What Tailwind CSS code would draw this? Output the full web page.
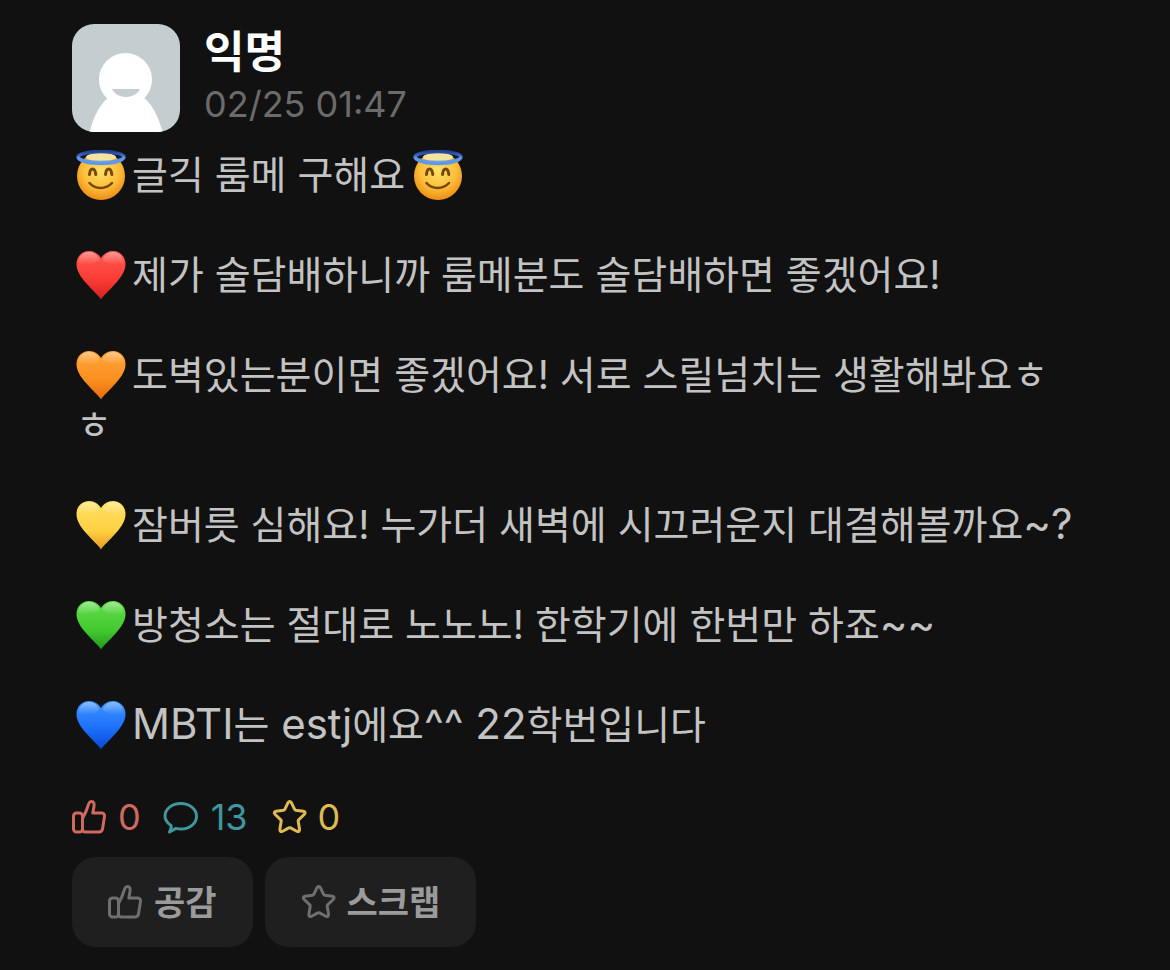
<!DOCTYPE html>
<html lang="ko">
<head>
  <meta charset="UTF-8">
  <meta name="viewport" content="width=device-width, initial-scale=1.0">
  <title>익명</title>
  <script src="https://cdn.jsdelivr.net/npm/@tailwindcss/browser@4"></script>
</head>
<body class="bg-[#111111] min-h-screen font-['Inter','Noto_Sans_CJK_KR',sans-serif]">

  <!-- shared shapes -->
  <svg class="absolute w-0 h-0" aria-hidden="true">
    <defs>
      <radialGradient id="face" cx="50%" cy="38%" r="62%">
        <stop offset="0" stop-color="#ffe06a"/>
        <stop offset="0.6" stop-color="#fdbf3b"/>
        <stop offset="1" stop-color="#ee8d17"/>
      </radialGradient>
      <linearGradient id="halo" x1="0" y1="0" x2="0" y2="1">
        <stop offset="0" stop-color="#1f4296"/>
        <stop offset="1" stop-color="#74aef5"/>
      </linearGradient>
      <linearGradient id="shine" x1="0" y1="0" x2="0" y2="1">
        <stop offset="0" stop-color="#fff" stop-opacity="0.4"/>
        <stop offset="1" stop-color="#fff" stop-opacity="0"/>
      </linearGradient>
      <linearGradient id="red" x1="0" y1="0" x2="0" y2="1">
        <stop offset="0" stop-color="#ff5a50"/><stop offset="0.6" stop-color="#fa3b35"/><stop offset="1" stop-color="#d3211f"/>
      </linearGradient>
      <linearGradient id="orange" x1="0" y1="0" x2="0" y2="1">
        <stop offset="0" stop-color="#ffa53c"/><stop offset="0.6" stop-color="#fb8f1e"/><stop offset="1" stop-color="#e8690f"/>
      </linearGradient>
      <linearGradient id="yellow" x1="0" y1="0" x2="0" y2="1">
        <stop offset="0" stop-color="#ffdf62"/><stop offset="0.6" stop-color="#ffd243"/><stop offset="1" stop-color="#e99a22"/>
      </linearGradient>
      <linearGradient id="green" x1="0" y1="0" x2="0" y2="1">
        <stop offset="0" stop-color="#62de4d"/><stop offset="0.6" stop-color="#43c930"/><stop offset="1" stop-color="#1f9a1c"/>
      </linearGradient>
      <linearGradient id="blue" x1="0" y1="0" x2="0" y2="1">
        <stop offset="0" stop-color="#3f93ff"/><stop offset="0.6" stop-color="#1a6dfb"/><stop offset="1" stop-color="#0b46d0"/>
      </linearGradient>
      <path id="heart-shape" d="M25 49.500C23 46 17 41 10 33C4 26 .5 20.500 .5 14C.5 6.500 6 1 13 1C18.500 1 22.500 4 25 8C27.500 4 31.500 1 37 1C44 1 49.500 6.500 49.500 14C49.500 20.500 46 26 40 33C33 41 27 46 25 49.500Z"/>
      <g id="heart-shine" fill="url(#shine)">
        <path d="M2.500 13C2.500 6 7.500 2 13 2C18 2 21.500 5 23.500 9.500C20 14 8 16 2.500 13Z"/>
        <path d="M47.500 13C47.500 6 42.500 2 37 2C32 2 28.500 5 26.500 9.500C30 14 42 16 47.500 13Z"/>
      </g>
      <symbol id="angel" viewBox="0 0 50 50">
        <ellipse cx="25" cy="6.500" rx="20" ry="5" fill="#10193a"/>
        <circle cx="25" cy="26" r="24" fill="url(#face)"/>
        <ellipse cx="25" cy="7" rx="15" ry="4" fill="#f3e3a0"/>
        <ellipse cx="25" cy="7" rx="23" ry="5.500" fill="none" stroke="url(#halo)" stroke-width="3.500"/>
        <path d="M2.500 8C7 15.500 43 15.500 47.500 8" fill="none" stroke="#5f98e8" stroke-width="3" stroke-linecap="round"/>
        <g fill="none" stroke="#76470a" stroke-linecap="round">
          <path d="M13.500 24.500C14 17 19 17 19.800 24.500M29.500 24.500C30.200 17 35.200 17 35.800 24.500" stroke-width="3"/>
          <path d="M13.500 33C19 39.500 30 39.500 36 33" stroke-width="2.500"/>
        </g>
      </symbol>
      <symbol id="thumb" viewBox="0 0 36 36">
        <rect x="1.500" y="14" width="9" height="19" rx="3"/>
        <path d="M10.500 19.500C13 15 14.500 12 15.800 7.500C16.700 4 17.500 2.500 19.300 2.500C21.800 2.500 22.500 4.500 22 7.500L20.800 14H29.800Q33 14.500 32.500 17.500L30.600 29.500Q30 33 27 33H13.500Q10.500 33 10.500 30Z"/>
      </symbol>
      <symbol id="star" viewBox="0 0 36 36">
        <path d="M15.900 3.900Q17.700 1 19.500 3.900L22.600 10.300Q23 11 23.800 11.200L31.300 12.300Q34.400 13 32.200 15.500L26.600 20.900Q26 21.500 26.200 22.300L27.500 30.100Q27.800 33.600 24.700 32.200L18.600 28.900Q17.700 28.400 16.800 28.900L10.700 32.200Q7.600 33.600 7.900 30.100L9.200 22.300Q9.400 21.500 8.800 20.900L3.200 15.500Q1 13 4.100 12.300L11.600 11.200Q12.400 11 12.800 10.300Z"/>
      </symbol>
    </defs>
  </svg>

  <article class="px-[72px] pt-6 pb-5">
    <header class="flex gap-6">
      <svg class="w-[108px] h-[108px] rounded-[22px] bg-[#c4cdd0] shrink-0" viewBox="0 0 108 108" role="img" aria-label="프로필">
        <path d="M17 110C21 93 28 80 37 73H71C80 80 87 93 91 110Z" fill="#fff"/>
        <circle cx="53.500" cy="55.500" r="26.500" fill="#fff"/>
        <path d="M40 65H68C63 75.500 45 75.500 40 65Z" fill="#c4cdd0"/>
      </svg>
      <div class="flex flex-col">
        <h1 class="text-white text-[44px] leading-[56px] font-bold">익명</h1>
        <time class="text-[#6b6b6b] text-4xl leading-[48px]">02/25 01:47</time>
      </div>
    </header>

    <div class="flex flex-col gap-[50px] mt-[18px] pl-1 pr-5 text-[#c3c3c3] text-[39px] leading-[50px] break-all">
      <p><svg class="inline-block align-top w-[50px] h-[50px] mr-[6px]"><use href="#angel"/></svg>글긱 룸메 구해요<svg class="inline-block align-top w-[50px] h-[50px] ml-2"><use href="#angel"/></svg></p>
      <p><svg class="inline-block align-top w-[50px] h-[50px] mr-[6px]"><use href="#heart-shape" fill="url(#red)"/><use href="#heart-shine"/></svg>제가 술담배하니까 룸메분도 술담배하면 좋겠어요!</p>
      <p><svg class="inline-block align-top w-[50px] h-[50px] mr-[6px]"><use href="#heart-shape" fill="url(#orange)"/><use href="#heart-shine"/></svg>도벽있는분이면 좋겠어요! 서로 스릴넘치는 생활해봐요ㅎㅎ</p>
      <p><svg class="inline-block align-top w-[50px] h-[50px] mr-[6px]"><use href="#heart-shape" fill="url(#yellow)"/><use href="#heart-shine"/></svg>잠버릇 심해요! 누가더 새벽에 시끄러운지 대결해볼까요<span class="text-[42px] leading-none">~?</span></p>
      <p><svg class="inline-block align-top w-[50px] h-[50px] mr-[6px]"><use href="#heart-shape" fill="url(#green)"/><use href="#heart-shine"/></svg>방청소는 절대로 노노노! 한학기에 한번만 하죠<span class="text-[42px] leading-none">~~</span></p>
      <p><svg class="inline-block align-top w-[50px] h-[50px] mr-[6px]"><use href="#heart-shape" fill="url(#blue)"/><use href="#heart-shine"/></svg><span class="text-[42px] leading-none">MBTI</span>는<span class="text-[42px] leading-none"> estj</span>에요<span class="text-[42px] leading-none">^^ 22</span>학번입니다</p>
    </div>

    <ul class="flex gap-6 mt-[43px] text-4xl leading-[48px]">
      <li class="flex items-center gap-[10px] text-[#d0695f]">
        <svg class="w-9 h-9 fill-none stroke-current stroke-[3]" stroke-linejoin="round"><use href="#thumb"/></svg>
        <span>0</span>
      </li>
      <li class="flex items-center gap-[10px] text-[#3f969c]">
        <svg class="w-9 h-9 fill-none stroke-current stroke-[3] overflow-visible" viewBox="2 0 36 36" stroke-linejoin="round">
          <path d="M8 26.500C4.500 24 2 21 2 17.200C2 10 9 4.500 17.700 4.500S33.500 10 33.500 17.200S26.700 30 18 30C16 30 14.500 29.800 13 29.400L6.500 33Q8.800 29.500 8 26.500Z"/>
        </svg>
        <span>13</span>
      </li>
      <li class="flex items-center gap-[10px] text-[#dfb951]">
        <svg class="w-9 h-9 fill-none stroke-current stroke-[3]" stroke-linejoin="round"><use href="#star"/></svg>
        <span>0</span>
      </li>
    </ul>

    <div class="flex gap-3 mt-4 text-[#9b9b9b] text-[34px] font-bold">
      <button type="button" class="flex items-center gap-[10px] h-[90px] px-9 rounded-3xl bg-[#1f1f1f]">
        <svg class="w-9 h-9 fill-none stroke-[#6f6f6f] stroke-[3]" stroke-linejoin="round"><use href="#thumb"/></svg>
        공감
      </button>
      <button type="button" class="flex items-center gap-[10px] h-[90px] px-9 rounded-3xl bg-[#1f1f1f]">
        <svg class="w-9 h-9 fill-none stroke-[#6f6f6f] stroke-[3]" stroke-linejoin="round"><use href="#star"/></svg>
        스크랩
      </button>
    </div>
  </article>

</body>
</html>
